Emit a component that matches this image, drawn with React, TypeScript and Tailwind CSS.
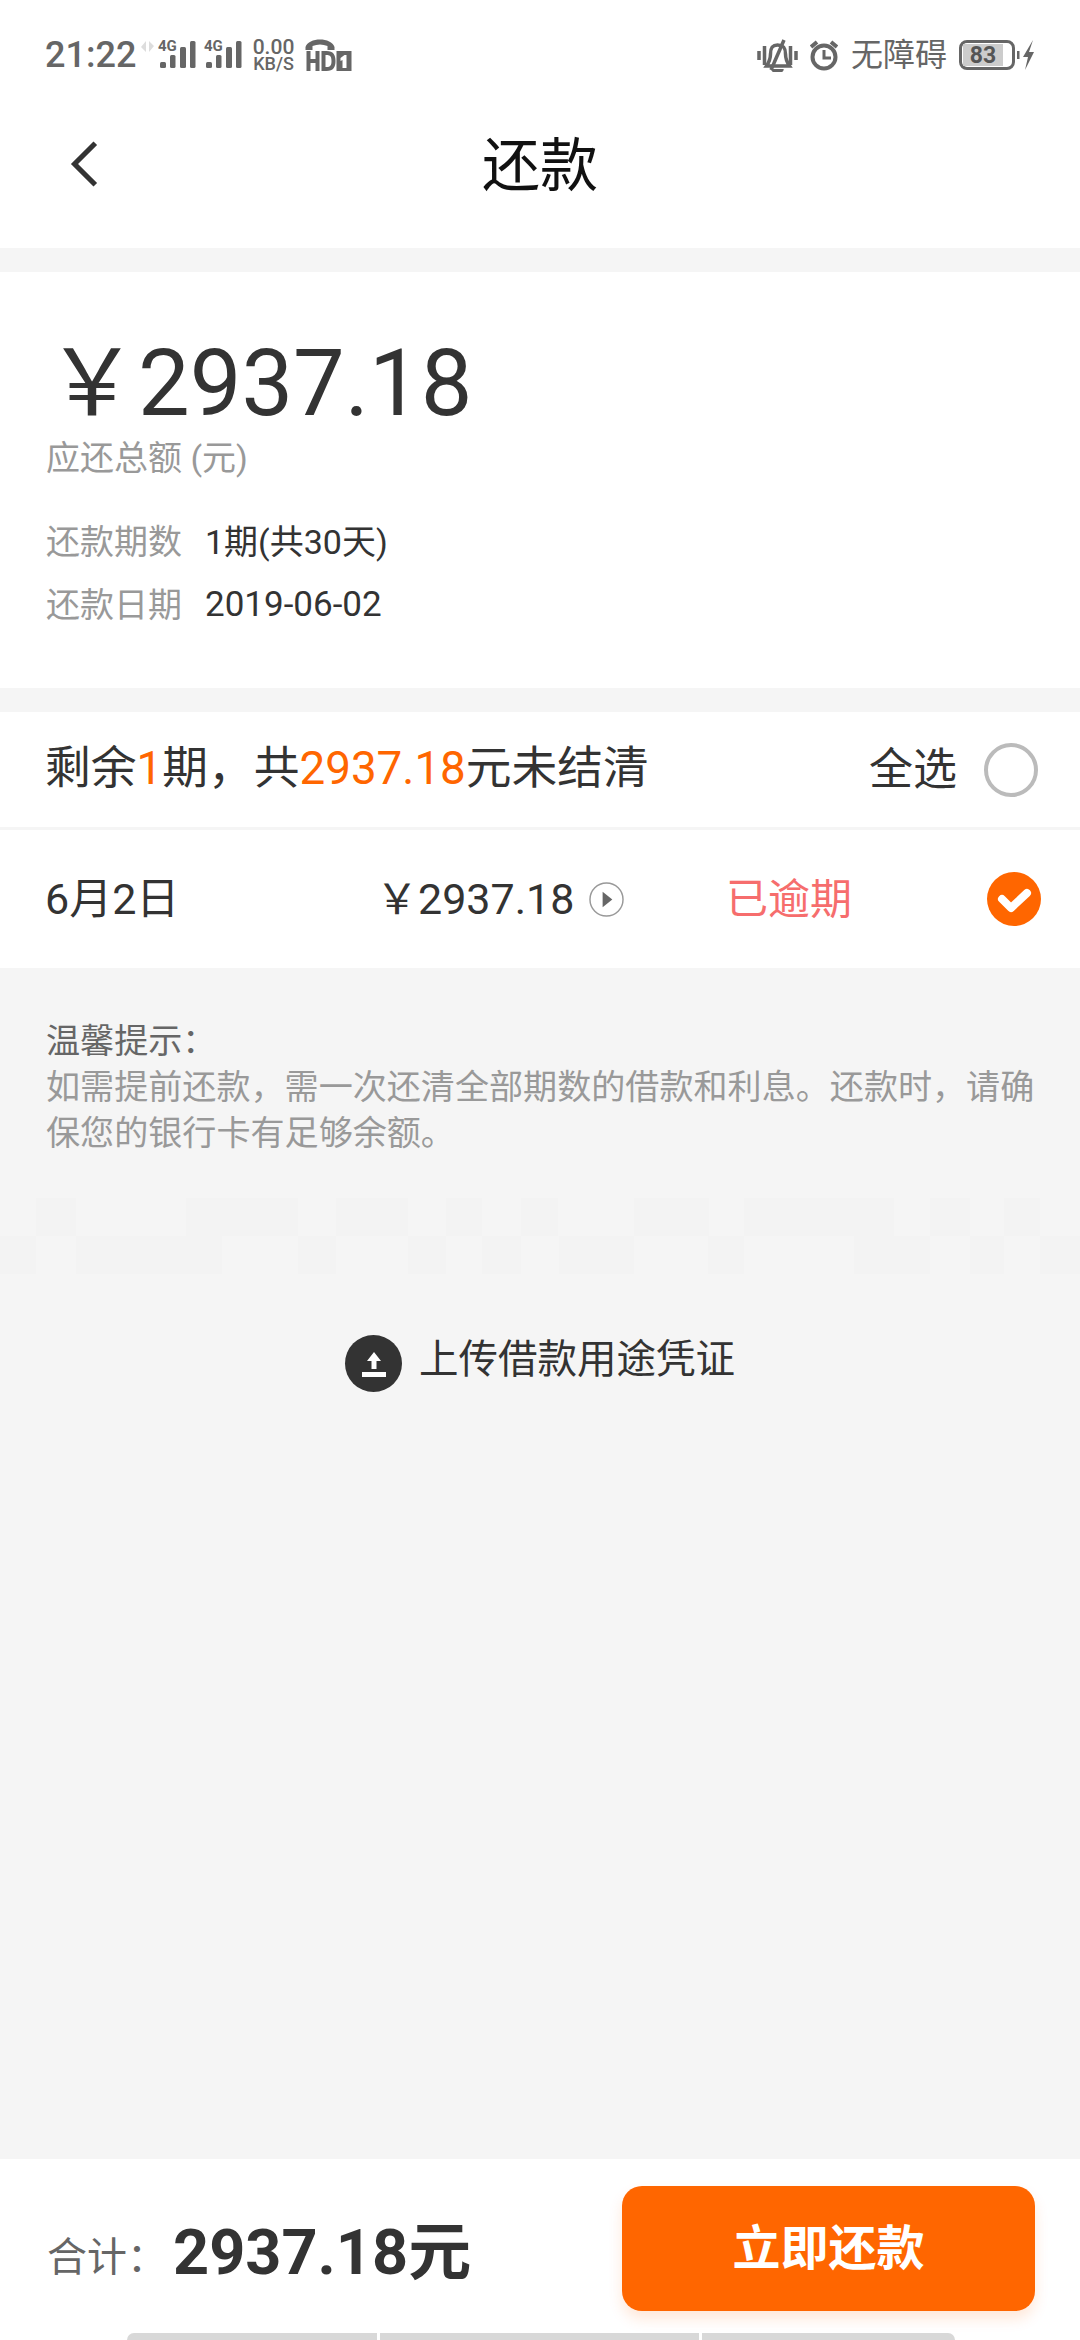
import { ChevronLeft } from 'lucide-react';

const font = { fontFamily: 'Roboto, "Noto Sans CJK SC", sans-serif' };

const mosaicTop = [36, 40, 110, 112, 38, 72, 38, 36, 39, 37, 76, 75, 35, 150, 36, 40, 34, 36, 40];
const mosaicBottom = [0, 36, 40, 146, 76, 38, 72, 38, 36, 39, 38, 75, 74, 36, 110, 76, 40, 34, 36, 40];

function MosaicRow({ cells }: { cells: number[] }) {
  return (
    <div className="flex h-[38px]">
      {cells.map((w, i) => (
        <div key={i} className={i % 2 === 1 ? 'bg-[#f3f3f3]' : ''} style={{ width: w }} />
      ))}
    </div>
  );
}

function Signal() {
  return (
    <div className="relative h-[28px] w-[38px]">
      <span className="absolute left-0 top-[-2px] text-[15px] leading-[15px] font-bold text-[#666]">4G</span>
      <svg viewBox="0 0 38 28" className="absolute inset-0 h-[28px] w-[38px]" fill="#666">
        <rect x="2" y="21" width="6" height="6" rx="1.500" />
        <rect x="12" y="14" width="5.500" height="13" rx="1.500" />
        <rect x="22" y="6" width="6" height="21" rx="1.500" />
        <rect x="32" y="0" width="5.500" height="27" rx="1.500" />
      </svg>
    </div>
  );
}

function StatusBar() {
  return (
    <div className="flex h-[90px] items-center justify-between pl-[45px] pr-[45px] pt-[20px] text-[#666]">
      <div className="flex items-center">
        <span className="w-[96px] text-[36px] font-medium leading-none">21:22</span>
        <svg viewBox="0 0 13 11" className="mb-[18px] h-[11px] w-[13px]" fill="#ddd">
          <path d="M0 6 5 0v11zM8 0l5 5-5 6z" />
        </svg>
        <div className="ml-[4px]"><Signal /></div>
        <div className="ml-[8px]"><Signal /></div>
        <div className="ml-[11px] flex w-[41px] flex-col items-center font-medium">
          <span className="text-[21px] leading-[17px]">0.00</span>
          <span className="text-[18px] leading-[15px]">KB/S</span>
        </div>
        <svg viewBox="0 0 46 32" className="ml-[11px] h-[32px] w-[47px]" fill="#666">
          <path d="M0 8C3-2 26-2 29 8v3h-7V7C17 5 12 5 7 7v4H0z" />
          <rect x="1" y="12" width="4" height="20" />
          <rect x="10" y="12" width="4" height="20" />
          <rect x="4" y="20" width="7" height="4" />
          <path d="M16 12h5c7 0 9 4 9 10s-2 10-9 10h-5zm4 4v12h1c4 0 5-2 5-6s-1-6-5-6z" />
          <path d="M31 12h15v20H31zm8 4-4 3v3l2-1v8h4V16z" fillRule="evenodd" />
        </svg>
      </div>
      <div className="flex items-center">
        <svg viewBox="0 0 41 33" className="h-[33px] w-[41px]" fill="none" stroke="#666" strokeWidth="3.500">
          <path d="M2 12v9M7.500 7v19M33.500 7v19M39 12v9" />
          <path d="M20.500 6c-6 0-7 4-7 9 0 6-2 9-4 12h23c-2-3-4-6-4-12 0-5-1-9-8-9z" />
          <path d="M27 1 14 31" />
          <path d="M16 30c0 3 9 3 9 0" fill="#666" />
        </svg>
        <svg viewBox="0 0 28 32" className="ml-[12px] h-[32px] w-[28px]" fill="none" stroke="#666" strokeWidth="4">
          <circle cx="14" cy="18" r="11.500" />
          <path d="M14 11v8h7" strokeWidth="3" />
          <path d="M1 8l6-5M27 8l-6-5" />
        </svg>
        <span className="ml-[13px] text-[32px] leading-none text-[#666]">无障碍</span>
        <div className="ml-[12px] flex h-[30px] w-[56px] items-center rounded-[8px] border-[3px] border-[#666] p-[1px]">
          <div className="flex h-full w-[40px] items-center justify-center bg-[#ccc] text-[23px] font-bold leading-none text-[#555]">83</div>
        </div>
        <svg viewBox="0 0 20 30" className="h-[30px] w-[20px]" fill="#666">
          <rect x="2" y="11" width="2.500" height="8" />
          <path d="M18 0 8 17h5l-3 13 9-18h-5z" />
        </svg>
      </div>
    </div>
  );
}

function Card() {
  return (
    <div className="h-[416px] bg-white pl-[46px] pt-[62px]">
      <div className="text-[92px] leading-[100px] text-[#333]">￥2937.18</div>
      <div className="mt-[4px] text-[34px] leading-[40px] text-[#999]">应还总额 (元)</div>
      <div className="mt-[33px] flex h-[63px] items-center text-[34px]">
        <span className="w-[159px] text-[#999]">还款期数</span>
        <span className="text-[#333]">1期(共30天)</span>
      </div>
      <div className="flex h-[63px] items-center text-[34px]">
        <span className="w-[159px] text-[#999]">还款日期</span>
        <span className="text-[35px] text-[#333]">2019-06-02</span>
      </div>
    </div>
  );
}

function Rows() {
  return (
    <div className="bg-white">
      <div className="flex h-[115px] items-center justify-between pl-[45px] pr-[42px] text-[#333]">
        <span className="text-[45.75px]">
          剩余<span className="text-[#ff6600]">1</span>期，共<span className="text-[#ff6600]">2937.18</span>元未结清
        </span>
        <div className="flex items-center text-[44px]">
          <span>全选</span>
          <div className="ml-[27px] h-[54px] w-[54px] rounded-full border-[4px] border-[#bbb]" />
        </div>
      </div>
      <div className="h-[3px] bg-[#f5f5f5]" />
      <div className="flex h-[138px] items-center pl-[45px] pr-[39px] text-[#333]">
        <span className="w-[331px] text-[43px]">6月2日</span>
        <span className="w-[42px] text-[42px]">￥</span>
        <span className="w-[171px] text-[43px]">2937.18</span>
        <svg viewBox="0 0 36 36" className="h-[35px] w-[35px]">
          <circle cx="18" cy="18" r="17" fill="none" stroke="#999" strokeWidth="1.500" />
          <path d="M14 10l10 8-10 8z" fill="#666" />
        </svg>
        <span className="ml-[102px] text-[42px] text-[#f66d6d]">已逾期</span>
        <svg viewBox="0 0 54 54" className="ml-auto h-[54px] w-[54px]">
          <circle cx="27" cy="27" r="27" fill="#ff6600" />
          <path d="M15 27l9 9 16-15" fill="none" stroke="#fff" strokeWidth="8" strokeLinecap="round" strokeLinejoin="round" />
        </svg>
      </div>
    </div>
  );
}

export default function App() {
  return (
    <div className="flex h-[2340px] w-[1080px] flex-col overflow-hidden bg-[#f5f5f5]" style={font}>
      <div className="h-[248px] bg-white">
        <StatusBar />
        <div className="relative flex h-[158px] items-center justify-center">
          <ChevronLeft className="absolute left-[46px] top-[36px] h-[76px] w-[76px] text-[#333]" strokeWidth={1.6} strokeLinecap="square" strokeLinejoin="miter" />
          <span className="mb-[6px] text-[58px] leading-none text-[#111]">还款</span>
        </div>
      </div>

      <div className="mt-[24px]">
        <Card />
      </div>

      <div className="mt-[24px]">
        <Rows />
      </div>

      <div className="pl-[46px] pr-[36px] pt-[50px] text-[34.1px] leading-[46px] text-[#999]">
        <div className="text-[#666]">温馨提示：</div>
        <div>如需提前还款，需一次还清全部期数的借款和利息。还款时，请确保您的银行卡有足够余额。</div>
      </div>

      <div className="mt-[42px]">
        <MosaicRow cells={mosaicTop} />
        <MosaicRow cells={mosaicBottom} />
      </div>

      <div className="mt-[61px] flex items-center justify-center">
        <div className="flex h-[57px] w-[57px] items-center justify-center rounded-full bg-[#333]">
          <svg viewBox="0 0 24 26" className="h-[26px] w-[24px]" fill="#fff">
            <path d="M12 1l7 9h-4.500v8h-5v-8H5z" />
            <rect x="0" y="21" width="24" height="5" />
          </svg>
        </div>
        <span className="mb-[8px] ml-[17px] text-[39.5px] leading-none text-[#333]">上传借款用途凭证</span>
      </div>

      <div className="mt-auto flex h-[181px] bg-white pl-[47px] pr-[45px]">
        <div className="mt-[58px] flex h-[70px] items-center text-[#333]">
          <span className="mt-[12px] text-[40px] text-[#666]">合计：</span>
          <span className="ml-[6px] text-[63px] font-bold leading-none">2937.18元</span>
        </div>
        <div className="ml-auto mt-[27px] flex h-[125px] w-[413px] items-center justify-center rounded-[20px] bg-[#ff6600] text-[48px] font-bold text-white shadow-[0_8px_14px_rgba(255,102,0,0.15)]">
          立即还款
        </div>
        <div className="absolute left-[127px] top-[2333px] flex h-[7px] w-[828px] gap-[3px] overflow-hidden rounded-t-[7px]">
          <div className="w-[250px] bg-[#d8d8d8]" />
          <div className="w-[319px] bg-[#d8d8d8]" />
          <div className="flex-1 bg-[#d8d8d8]" />
        </div>
      </div>
    </div>
  );
}
